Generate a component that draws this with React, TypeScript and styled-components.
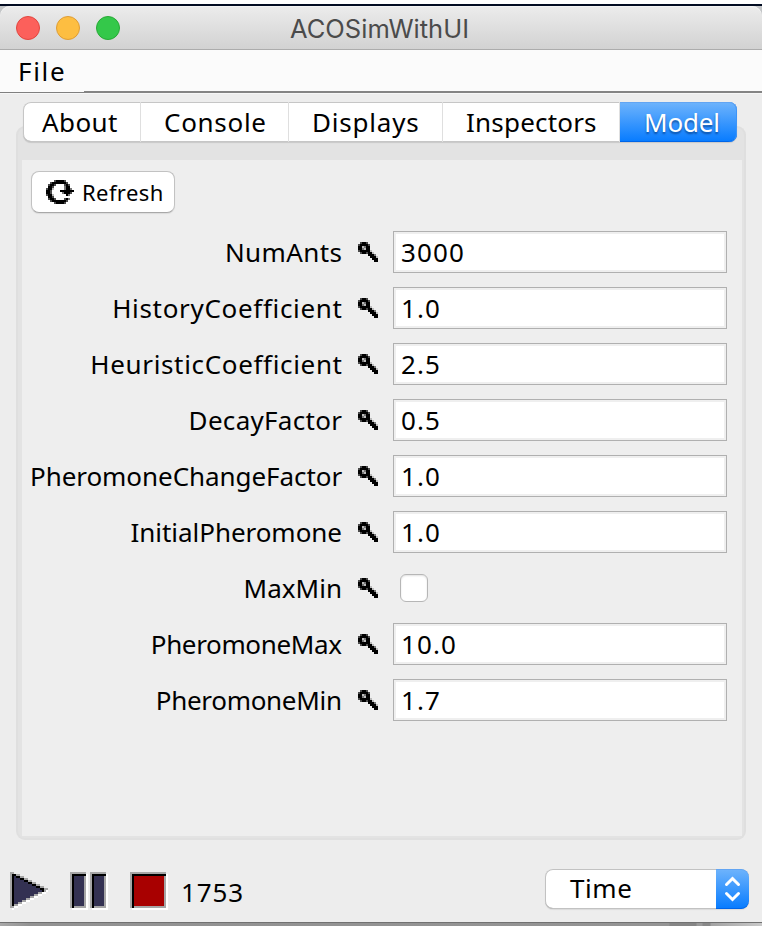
import React from "react";
import styled, { createGlobalStyle, css } from "styled-components";

const Global = createGlobalStyle`
  * { box-sizing: border-box; }
  body { margin: 0; background: #fff; font-family: "Noto Sans", "Open Sans", sans-serif; }
`;

const Screen = styled.div`
  width: 762px;
  height: 926px;
  display: flex;
  flex-direction: column;
  overflow: hidden;
  border-top: 4px solid #fff;
`;

const Backdrop = styled.div`
  height: 46px;
  flex: none;
  border-top: 2px solid #020c22;
  background: #c4c6c8;
`;

const TitleBar = styled.header`
  height: 44px;
  display: grid;
  grid-template-columns: 1fr auto 1fr;
  align-items: center;
  padding: 0 3px 0 16px;
  border-radius: 10px 10px 0 0;
  border-bottom: 1px solid #acacac;
  box-shadow: inset 0 1px 0 #f4f4f4;
  background: linear-gradient(#ececec, #d2d2d2);
`;

const Lights = styled.div`
  display: flex;
  gap: 16px;
`;

const Light = styled.i<{ $fill: string; $edge: string }>`
  width: 24px;
  height: 24px;
  border-radius: 50%;
  background: ${(p) => p.$fill};
  border: 1px solid ${(p) => p.$edge};
`;

const Title = styled.h1`
  margin: 2px 0 0;
  font: 400 25.5px/30px Inter, "Liberation Sans", sans-serif;
  color: #4b4b4b;
  padding-right: 16px;
`;

const MenuBar = styled.nav`
  height: 43px;
  flex: none;
  display: flex;
  background: #fbfbfb;
`;

const MenuItem = styled.div`
  width: 84px;
  padding: 0 0 0 18px;
  border-bottom: 1px solid #808080;
  font-size: 26px;
  line-height: 42px;
  color: #000;
`;

const MenuRest = styled.div`
  flex: 1;
  border-bottom: 2px solid #848484;
`;

const Body = styled.main`
  flex: 1;
  display: flex;
  flex-direction: column;
  background: #ededed;
  box-shadow: inset 0 1px 0 #f6f6f6;
`;

const TabList = styled.div`
  height: 40px;
  flex: none;
  display: flex;
  margin: 9px 25px 0 23px;
  border-radius: 8px;
  position: relative;
  z-index: 1;
  background: #fff;
  box-shadow: inset 0 0 0 1px #c6c6c6, inset 0 -1px 0 #a9a9a9, 0 1px 1px rgba(0, 0, 0, 0.12);
`;

const Tab = styled.div<{ $width: number; $inset: number; $active?: boolean }>`
  width: ${(p) => p.$width}px;
  padding-left: ${(p) => p.$inset}px;
  font-size: 26px;
  line-height: 41px;
  color: #000;
  white-space: nowrap;
  border-right: 1px solid #dfdfdf;
  ${(p) =>
    p.$active &&
    css`
      color: #fff;
      border: 0;
      border-radius: 0 8px 8px 0;
      background: linear-gradient(#6fb4fc, #067bff);
      box-shadow: inset 0 1px 0 #62a5f3, inset -1px 0 0 #3d94f7, inset 0 -1px 0 #0065e8;
      text-shadow: 0 2px 2px rgba(0, 50, 120, 0.65);
    `}
`;

const Tracked = styled.span<{ $track: number }>`
  letter-spacing: ${(p) => p.$track}px;
  margin-right: ${(p) => -p.$track}px;
`;

const Group = styled.section`
  width: 730px;
  height: 714px;
  flex: none;
  margin: -16px 0 0 16px;
  padding: 32px 2px 2px 4px;
  border: 2px solid #dfdfdf;
  border-bottom-color: #e0e0e0;
  border-radius: 9px;
  background: #e3e3e3;
`;

const Panel = styled.div`
  height: 676px;
  padding: 11px 0 0 8px;
  background: #eeeeee;
`;

const RefreshButton = styled.button`
  display: flex;
  align-items: center;
  width: 144px;
  height: 42px;
  margin-left: 1px;
  padding: 0 0 1px 14px;
  gap: 8px;
  border: 1px solid #c2c2c2;
  border-bottom-color: #a8a8a8;
  border-radius: 8px;
  background: #fff;
  color: #000;
  font: 22px/38px "Noto Sans", sans-serif;
  box-shadow: 0 1px 1px rgba(0, 0, 0, 0.08);
`;

const Form = styled.div`
  display: grid;
  grid-template-columns: 313px 20px 334px;
  column-gap: 15px;
  grid-auto-rows: 42px;
  row-gap: 14px;
  margin-top: 18px;
  align-items: center;
`;

const Label = styled.label`
  padding-right: 1px;
  text-align: right;
  font-size: 26px;
  line-height: 42px;
  white-space: nowrap;
  color: #000;
`;

const Field = styled.div`
  height: 42px;
  padding-left: 7px;
  border: 1px solid #b0b0b0;
  box-shadow: inset 0 0 0 2px #efefef;
  background: #fff;
  font-size: 26px;
  line-height: 40px;
  color: #000;
`;

const CheckBox = styled.div`
  width: 28px;
  height: 28px;
  margin-left: 7px;
  border: 1px solid #b6b6b6;
  border-radius: 6px;
  background: #fff;
  box-shadow: inset 0 1px 2px rgba(0, 0, 0, 0.12);
`;

const Footer = styled.footer`
  flex: 1;
  display: flex;
  align-items: flex-start;
  padding: 29px 13px 0 10px;
`;

const Controls = styled.div`
  display: flex;
  align-items: flex-start;
  padding-top: 3px;
`;

const Control = styled.div<{ $width: number }>`
  width: ${(p) => p.$width}px;
  height: 38px;
`;

const Count = styled.output`
  font-size: 26px;
  line-height: 40px;
  color: #000;
`;

const Select = styled.div`
  margin-left: auto;
  display: flex;
  width: 204px;
  height: 40px;
  border-radius: 8px;
  overflow: hidden;
  background: #fff;
  box-shadow: inset 0 0 0 1px #c2c2c2, inset 0 -1px 0 #a6a6a6, 0 1px 1px rgba(0, 0, 0, 0.08);
`;

const SelectValue = styled.span`
  flex: 1;
  padding-left: 25px;
  font-size: 26px;
  line-height: 39px;
  color: #000;
`;

const Stepper = styled.span`
  width: 33px;
  background: linear-gradient(#6fb4fc, #067bff);
  box-shadow: inset 0 1px 0 #62a5f3, inset 0 -1px 0 #0065e8;
  border-radius: 0 8px 8px 0;
`;

const BottomEdge = styled.div`
  height: 4px;
  flex: none;
  border-top: 1px solid #717171;
  background: linear-gradient(
    90deg, #a8a8a8 0, #929292 30px, #949494 669px, #858585 670px, #858585 696px,
    #999 697px, #999 702px, #888 703px, #888 710px, #a2a2a2 711px, #c9c9c9 762px
  );
`;

const Svg = styled.svg`
  display: block;
  flex: none;
`;

const SHADES: Record<string, string> = {
  K: "#000", d: "#4a4a4a", g: "#777", l: "#bbb",
  G: "#a6a6a6", F: "#333152", W: "#fff", R: "#a80000",
};

/* Bitmap glyph: each character is one 2x2 pixel cell. */
const Bitmap = ({ rows }: { rows: string[] }) => {
  const w = Math.max(...rows.map((r) => r.length));
  return (
    <Svg width={w * 2} height={rows.length * 2} viewBox={`0 0 ${w} ${rows.length}`} shapeRendering="crispEdges">
      {rows.flatMap((row, y) =>
        [...row].map((c, x) =>
          SHADES[c] ? <rect key={`${x}-${y}`} x={x} y={y} width={1} height={1} fill={SHADES[c]} /> : null
        )
      )}
    </Svg>
  );
};

const KEY = [
  ".dKKd.....",
  "dKKKKd....",
  "KKlgKK....",
  "KKglKK....",
  "dKKKKKl...",
  ".dKKdKKl..",
  ".....KKKg.",
  "......KKKl",
  ".......KKK",
  "........KK",
];

const REFRESH = [
  "....dKKKKd....",
  "..dKKKKKKKd...",
  ".dKKd....dKd..",
  ".KKd.....gKK..",
  "dKKl.....gKKg.",
  "KKd....KKKKKKK",
  "KKd.....gKKKd.",
  "dKKl......Kg..",
  ".KKd..........",
  ".dKKd....dKg..",
  "..dKKKKKKKd...",
  "....dKKKKd....",
];

const playRows = () => {
  const rows = ["GG"];
  for (let r = 1; r <= 8; r++) rows.push("GK" + "F".repeat(Math.max(0, 2 * r - 3)) + (r > 1 ? "KK" : "K") + "GG");
  for (let r = 9; r <= 16; r++) rows.push("GK" + "F".repeat(2 * (16 - r)) + (r === 9 ? "KGW" : "GGWW"));
  rows.push("GGWW");
  rows.push(".W");
  return rows;
};

const bevelRows = (w: number, fill: string) => [
  "G".repeat(w),
  "G" + "K".repeat(w - 1) + "W",
  ...Array.from({ length: 15 }, () => "GK" + fill.repeat(w - 3) + "GW"),
  "GK" + "G".repeat(w - 2) + "W",
  "." + "W".repeat(w),
];

const pauseRows = () => {
  const bar = bevelRows(8, "F");
  return bar.map((r) => r.padEnd(9, ".") + "." + r.padEnd(9, "."));
};

const params: { name: string; track: number; value?: string }[] = [
  { name: "NumAnts", track: 0.4, value: "3000" },
  { name: "HistoryCoefficient", track: 0.68, value: "1.0" },
  { name: "HeuristicCoefficient", track: 0.66, value: "2.5" },
  { name: "DecayFactor", track: 0.3, value: "0.5" },
  { name: "PheromoneChangeFactor", track: -0.06, value: "1.0" },
  { name: "InitialPheromone", track: -0.05, value: "1.0" },
  { name: "MaxMin", track: 0.02 },
  { name: "PheromoneMax", track: -0.35, value: "10.0" },
  { name: "PheromoneMin", track: -0.3, value: "1.7" },
];

const tabs = [
  { name: "About", width: 118, inset: 19, track: 0.4 },
  { name: "Console", width: 148, inset: 23, track: 0.7 },
  { name: "Displays", width: 154, inset: 23, track: 0.8 },
  { name: "Inspectors", width: 177, inset: 23, track: 0.2 },
  { name: "Model", width: 117, inset: 24, track: -0.2, active: true },
];

export default function App() {
  return (
    <Screen>
      <Global />
      <Backdrop>
        <TitleBar>
          <Lights>
            <Light $fill="#fc605b" $edge="#e2463f" />
            <Light $fill="#fdbe41" $edge="#df9d35" />
            <Light $fill="#34c84a" $edge="#27aa35" />
          </Lights>
          <Title>ACOSimWithUI</Title>
        </TitleBar>
      </Backdrop>
      <MenuBar>
        <MenuItem><Tracked $track={1.7}>File</Tracked></MenuItem>
        <MenuRest />
      </MenuBar>
      <Body>
        <TabList>
          {tabs.map((t) => (
            <Tab key={t.name} $width={t.width} $inset={t.inset} $active={t.active}>
              <Tracked $track={t.track}>{t.name}</Tracked>
            </Tab>
          ))}
        </TabList>
        <Group>
          <Panel>
            <RefreshButton>
              <Bitmap rows={REFRESH} />
              <Tracked $track={0.4}>Refresh</Tracked>
            </RefreshButton>
            <Form>
              {params.map((p) => (
                <React.Fragment key={p.name}>
                  <Label><Tracked $track={p.track}>{p.name}</Tracked></Label>
                  <Bitmap rows={KEY} />
                  {p.value ? (
                    <Field><Tracked $track={1.1}>{p.value}</Tracked></Field>
                  ) : (
                    <CheckBox />
                  )}
                </React.Fragment>
              ))}
            </Form>
          </Panel>
        </Group>
        <Footer>
          <Controls>
            <Control $width={60}><Bitmap rows={playRows()} /></Control>
            <Control $width={60}><Bitmap rows={pauseRows()} /></Control>
            <Control $width={51}><Bitmap rows={bevelRows(18, "R")} /></Control>
            <Count><Tracked $track={0.9}>1753</Tracked></Count>
          </Controls>
          <Select>
            <SelectValue><Tracked $track={0.6}>Time</Tracked></SelectValue>
            <Stepper>
              <Svg width="33" height="40" viewBox="0 0 33 40" fill="none" stroke="#fff" strokeWidth="3" strokeLinecap="round" strokeLinejoin="miter">
                <path d="M10.5 15.5 16.5 9.5 22.5 15.5M10.5 24.5 16.5 30.5 22.5 24.5" />
              </Svg>
            </Stepper>
          </Select>
        </Footer>
      </Body>
      <BottomEdge />
    </Screen>
  );
}
